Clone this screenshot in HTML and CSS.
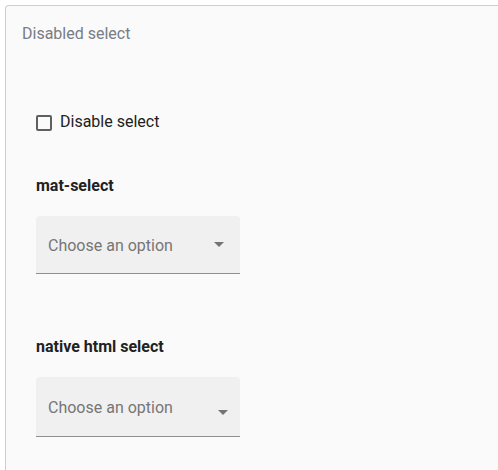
FILE: index.html
```html
<!DOCTYPE html>
<html>
<head>
<meta charset="utf-8">
<link rel="stylesheet" href="styles.css">
</head>
<body>
<div class="card">
  <div class="card-title">Disabled select</div>
  <div class="card-content">
    <label class="check-row">
      <span class="check-box"></span>
      <span class="check-label">Disable select</span>
    </label>
    <h4 class="heading heading-mat">mat-select</h4>
    <div class="field field-mat">
      <span class="placeholder">Choose an option</span>
      <span class="arrow"></span>
    </div>
    <h4 class="heading heading-native">native html select</h4>
    <div class="field field-native">
      <span class="placeholder">Choose an option</span>
      <span class="arrow"></span>
    </div>
  </div>
</div>
</body>
</html>
```
FILE: styles.css
```css
html, body {
  margin: 0;
  padding: 0;
  background: #ffffff;
  font-family: Roboto, "Liberation Sans", sans-serif;
}

body {
  padding: 5px 0 0 5px;
  height: 100vh;
  box-sizing: border-box;
  overflow: hidden;
}

.card {
  height: 100%;
  background: #fafafa;
  border-top: 1px solid #cdcdcd;
  border-left: 1px solid #cdcdcd;
  border-top-left-radius: 4px;
  box-sizing: border-box;
}

.card-title {
  padding: 18px 0 0 16px;
  font-size: 16px;
  line-height: 20px;
  color: #787c85;
}

.card-content {
  padding-left: 30px;
  padding-top: 68px;
}

.check-row {
  display: flex;
  align-items: center;
  height: 20px;
}

.check-box {
  width: 16px;
  height: 16px;
  box-sizing: border-box;
  border: 2px solid #5f5f5f;
  border-radius: 2px;
  margin-right: 8px;
  margin-top: 1px;
}

.check-label {
  font-size: 16px;
  line-height: 20px;
  color: #212121;
}

.heading {
  margin: 0;
  font-size: 16px;
  line-height: 20px;
  font-weight: 700;
  color: #212121;
}

.heading-mat {
  margin-top: 44px;
}

.heading-native {
  margin-top: 63px;
}

.field {
  margin-top: 20px;
  width: 204px;
  box-sizing: border-box;
  background: #f0f0f0;
  border-radius: 4px 4px 0 0;
  border-bottom: 1px solid #8f8f8f;
  display: flex;
  align-items: flex-start;
  justify-content: space-between;
  padding-left: 12px;
}

.field-mat {
  height: 58px;
  padding-top: 20px;
  padding-right: 16px;
}

.field-native {
  height: 60px;
  padding-top: 21px;
  padding-right: 12px;
}

.placeholder {
  font-size: 16px;
  line-height: 20px;
  color: #767676;
}

.arrow {
  width: 0;
  height: 0;
  border-left: 5px solid transparent;
  border-right: 5px solid transparent;
  border-top: 5px solid #747474;
}

.field-mat .arrow {
  margin-top: 6px;
}

.field-native .arrow {
  margin-top: 12px;
}
```
